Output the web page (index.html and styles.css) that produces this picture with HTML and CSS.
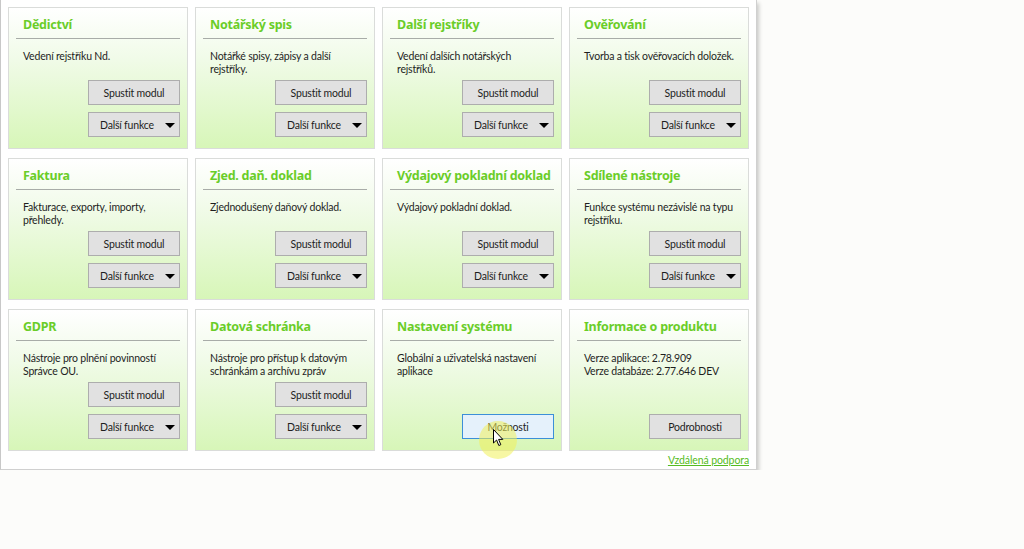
FILE: index.html
```html
<!DOCTYPE html>
<html lang="cs">
<head>
<meta charset="utf-8">
<title>Moduly</title>
<link rel="stylesheet" href="styles.css">
</head>
<body>
<div class="panel">
  <div class="grid">
    <div class="card">
      <div class="title">Dědictví</div>
      <div class="desc">Vedení rejstříku Nd.</div>
      <div class="actions">
        <button class="btn">Spustit modul</button>
        <button class="btn dd">Další funkce<span class="tri"></span></button>
      </div>
    </div>
    <div class="card">
      <div class="title">Notářský spis</div>
      <div class="desc">Notářké spisy, zápisy a další rejstříky.</div>
      <div class="actions">
        <button class="btn">Spustit modul</button>
        <button class="btn dd">Další funkce<span class="tri"></span></button>
      </div>
    </div>
    <div class="card">
      <div class="title">Další rejstříky</div>
      <div class="desc">Vedení dalších notářských rejstříků.</div>
      <div class="actions">
        <button class="btn">Spustit modul</button>
        <button class="btn dd">Další funkce<span class="tri"></span></button>
      </div>
    </div>
    <div class="card">
      <div class="title">Ověřování</div>
      <div class="desc">Tvorba a tisk ověřovacích doložek.</div>
      <div class="actions">
        <button class="btn">Spustit modul</button>
        <button class="btn dd">Další funkce<span class="tri"></span></button>
      </div>
    </div>

    <div class="card">
      <div class="title">Faktura</div>
      <div class="desc">Fakturace, exporty, importy, přehledy.</div>
      <div class="actions">
        <button class="btn">Spustit modul</button>
        <button class="btn dd">Další funkce<span class="tri"></span></button>
      </div>
    </div>
    <div class="card">
      <div class="title">Zjed. daň. doklad</div>
      <div class="desc">Zjednodušený daňový doklad.</div>
      <div class="actions">
        <button class="btn">Spustit modul</button>
        <button class="btn dd">Další funkce<span class="tri"></span></button>
      </div>
    </div>
    <div class="card">
      <div class="title">Výdajový pokladní doklad</div>
      <div class="desc">Výdajový pokladní doklad.</div>
      <div class="actions">
        <button class="btn">Spustit modul</button>
        <button class="btn dd">Další funkce<span class="tri"></span></button>
      </div>
    </div>
    <div class="card">
      <div class="title">Sdílené nástroje</div>
      <div class="desc">Funkce systému nezávislé na typu rejstříku.</div>
      <div class="actions">
        <button class="btn">Spustit modul</button>
        <button class="btn dd">Další funkce<span class="tri"></span></button>
      </div>
    </div>

    <div class="card">
      <div class="title">GDPR</div>
      <div class="desc">Nástroje pro plnění povinností Správce OU.</div>
      <div class="actions">
        <button class="btn">Spustit modul</button>
        <button class="btn dd">Další funkce<span class="tri"></span></button>
      </div>
    </div>
    <div class="card">
      <div class="title">Datová schránka</div>
      <div class="desc">Nástroje pro přístup k datovým schránkám a archívu zpráv</div>
      <div class="actions">
        <button class="btn">Spustit modul</button>
        <button class="btn dd">Další funkce<span class="tri"></span></button>
      </div>
    </div>
    <div class="card">
      <div class="title">Nastavení systému</div>
      <div class="desc">Globální a uživatelská nastavení aplikace</div>
      <div class="actions">
        <button class="btn hover">Možnosti
          <span class="click"></span>
          <svg class="cursor" width="12" height="18" viewBox="0 0 12 18"><path d="M0.5 0.5 L0.5 14 L3.6 11 L5.8 16.5 L7.8 15.7 L5.6 10.4 L9.8 10.4 Z" fill="#fff" stroke="#000" stroke-width="1"/></svg>
        </button>
      </div>
    </div>
    <div class="card">
      <div class="title">Informace o produktu</div>
      <div class="desc">Verze aplikace: 2.78.909<br>Verze databáze: 2.77.646 DEV</div>
      <div class="actions">
        <button class="btn">Podrobnosti</button>
      </div>
    </div>
  </div>
  <div class="footer"><a href="#" class="link">Vzdálená podpora</a></div>
</div>
</body>
</html>
```
FILE: styles.css
```css
html, body {
  margin: 0;
  padding: 0;
  background: #fcfcfa;
  font-family: "Lato", "Noto Sans", "DejaVu Sans", sans-serif;
}

.panel {
  width: 757px;
  height: 470px;
  box-sizing: border-box;
  background: #ffffff;
  border-left: 1px solid #c8c8c8;
  border-right: 1px solid #d0d0d0;
  border-bottom: 1px solid #d0d0d0;
  box-shadow: 2px 3px 4px rgba(0, 0, 0, 0.2);
  padding: 7px 6px 0 7px;
  display: flex;
  flex-direction: column;
}

.grid {
  display: grid;
  grid-template-columns: repeat(4, 180px);
  grid-template-rows: repeat(3, 142px);
  column-gap: 7px;
  row-gap: 9px;
}

.card {
  box-sizing: border-box;
  border: 1px solid #dadcda;
  background: linear-gradient(to bottom, #ffffff 0%, #f1fbe9 35%, #d7f6b8 100%);
  padding: 0 7px 11px 7px;
  display: flex;
  flex-direction: column;
}

.title {
  font-family: "Noto Sans", "Open Sans", sans-serif;
  font-weight: bold;
  font-size: 12.5px;
  color: #6acd28;
  padding: 7px 0 4px 7px;
  height: 19px;
  line-height: 19px;
  border-bottom: 1px solid #a8aca8;
  letter-spacing: -0.25px;
  white-space: nowrap;
}

.desc {
  font-size: 10.5px;
  line-height: 13px;
  letter-spacing: -0.2px;
  color: #1e1e1e;
  padding: 11px 4px 0 7px;
}

.actions {
  margin-top: auto;
  display: flex;
  flex-direction: column;
  align-items: flex-end;
  gap: 7px;
}

.btn {
  position: relative;
  width: 92px;
  height: 25px;
  box-sizing: border-box;
  background: #e1e1e1;
  border: 1px solid #adadad;
  font-family: inherit;
  font-size: 10.5px;
  letter-spacing: -0.2px;
  color: #1e1e1e;
  padding: 0;
}

.btn.dd {
  text-align: left;
  padding-left: 11px;
}

.tri {
  position: absolute;
  right: 4px;
  top: 10px;
  width: 0;
  height: 0;
  border-left: 5px solid transparent;
  border-right: 5px solid transparent;
  border-top: 5px solid #000;
}

.btn.hover {
  background: #e5f1fb;
  border-color: #3c8fd8;
}

.click {
  position: absolute;
  left: 16px;
  top: 6px;
  width: 38px;
  height: 38px;
  border-radius: 50%;
  background: rgba(240, 240, 90, 0.55);
  pointer-events: none;
}

.cursor {
  position: absolute;
  left: 30px;
  top: 14px;
}

.footer {
  display: flex;
  justify-content: flex-end;
  padding: 3px 1px 0 0;
}

.link {
  font-size: 10.5px;
  letter-spacing: -0.1px;
  color: #55bb22;
  text-decoration: underline;
}
```
